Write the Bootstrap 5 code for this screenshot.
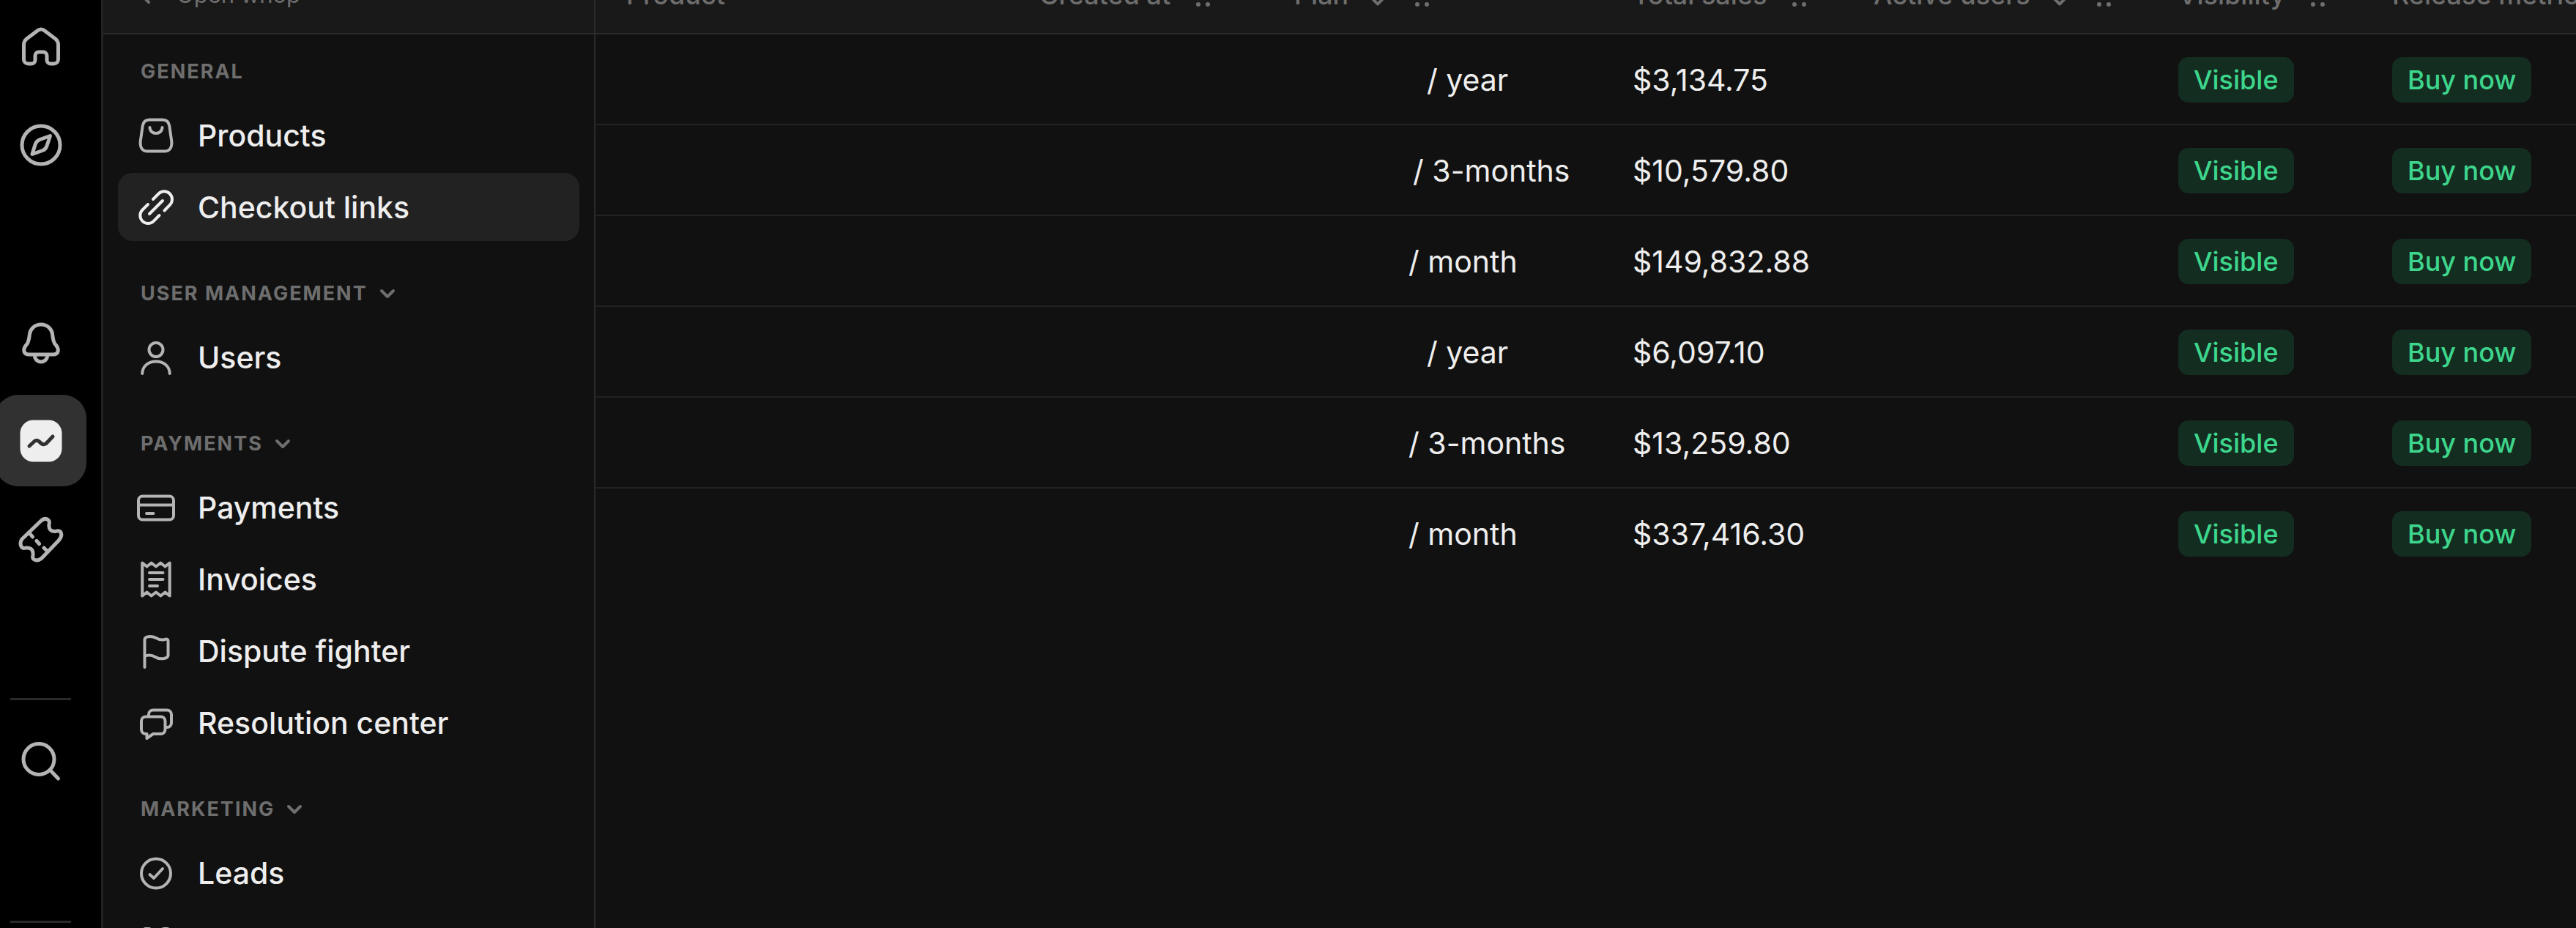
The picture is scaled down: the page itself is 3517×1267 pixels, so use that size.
<!DOCTYPE html>
<html lang="en" data-bs-theme="dark">
<head>
<meta charset="utf-8">
<meta name="viewport" content="width=device-width, initial-scale=1">
<title>Checkout links</title>
<link href="https://cdn.jsdelivr.net/npm/bootstrap@5.3.0/dist/css/bootstrap.min.css" rel="stylesheet">
<style>
  :root { --ink:#eeeeee; --soft:#b4b4b4; --dim:#6e6e6e; --line:#2a2a2a; --panel:#111111; --raised:#191919; }
  body { font-family: Inter, "Liberation Sans", sans-serif; background: var(--panel); color: var(--ink); font-size: 41px; line-height: 48px; }
  a { color: inherit; text-decoration: none; }
  svg { display: block; flex: none; fill: none; stroke: currentColor; stroke-linecap: round; stroke-linejoin: round; }

  /* icon rail */
  .rail { width: 141px; background: #000; border-right: 3px solid #222; padding-top: 1px; }
  .rail-group { width: 125px; gap: 9px; margin-left: -7px; }
  .rail-group + .rail-group { margin-top: 145px; }
  .rail-tile { width: 125px; height: 125px; border-radius: 32px; color: var(--soft); }
  .rail-tile svg { width: 64px; height: 64px; stroke-width: 5; }
  .rail-tile.active { background: #313131; color: var(--ink); }
  .rail-rule { width: 83px; height: 3px; margin: 155px 0 21px 14px; background: var(--line); opacity: 1; border: 0; }

  /* sidebar */
  .side { width: 672px; border-right: 2px solid var(--line); }
  .side-top { height: 106px; padding: 0 36px; background: var(--raised); border-bottom: 2px solid var(--line); color: var(--dim); font-size: 31px; gap: 24px; }
  .side-top svg { width: 40px; height: 40px; stroke-width: 4; }
  .side-body { padding: 31px 20px 0; }
  .side-group { margin-bottom: 52px; }
  .side-label { height: 40px; margin-bottom: 20px; padding: 0 31px; border: 0; background: none; color: var(--dim); font-size: 27px; line-height: 40px; font-weight: 700; letter-spacing: 2px; gap: 15px; text-transform: uppercase; }
  .side-label svg { width: 24px; height: 24px; stroke-width: 4; }
  .side-links { gap: 5px; }
  .side-link { height: 93px; padding: 0 24px; gap: 29px; border-radius: 20px; font-weight: 500; }
  .side-link svg { width: 56px; height: 56px; stroke-width: 4; color: var(--soft); }
  .side-link.active { background: #222; }
  .side-link.active svg { color: var(--ink); }

  /* table */
  .grid-table { table-layout: fixed; width: 100%; border-collapse: separate; border-spacing: 0; }
  .grid-table th { height: 106px; padding: 0 42px; background: var(--raised); border-bottom: 2px solid var(--line); color: var(--dim); font-size: 36px; font-weight: 500; white-space: nowrap; vertical-align: middle; }
  .grid-table td { height: 124px; padding: 2px 42px 0; border-bottom: 2px solid #222; white-space: nowrap; vertical-align: middle; }
  .grid-table tbody tr:last-child td { border-bottom-color: transparent; }
  .th-in { gap: 34px; }
  .th-in-sort { gap: 28px; }
  .grip { width: 20px; height: 36px; fill: currentColor; stroke: none; }
  .sorter { width: 24px; height: 36px; stroke-width: 4; margin-right: 10px; }
  .c-product { width: 564px; } .c-created { width: 348px; } .c-plan { width: 462px; }
  .c-sales { width: 329px; } .c-active { width: 416px; } .c-vis { width: 292px; }
  .price { display: inline-block; }
  .price-s { width: 156px; } .price-m { width: 162px; } .price-l { width: 181px; }
  .pill { display: inline-block; padding: 0 21px; height: 62px; line-height: 62px; border-radius: 14px; background: #132d21; color: #3dd68c; font-size: 36px; font-weight: 500; vertical-align: middle; }

  /* the bar over both panes runs past the top of the window */
  .bar-pull { margin-top: -59px; }
</style>
<script src="https://cdn.jsdelivr.net/npm/bootstrap@5.3.0/dist/js/bootstrap.bundle.min.js"></script>
</head>
<body>
<div class="d-flex vh-100 overflow-hidden">

  <nav class="rail flex-shrink-0 overflow-hidden" aria-label="Main">
    <div class="rail-group d-flex flex-column">
      <a href="#" class="rail-tile d-flex align-items-center justify-content-center" aria-label="Home"><svg viewBox="0 0 64 64"><path d="M32 8c2 0 3.500.7 5 2L51 20.500c3 2.300 4.500 4.500 4.500 8.500v20a6 6 0 0 1-6 6H45a5 5 0 0 1-5-5v-6a5 5 0 0 0-5-5h-6a5 5 0 0 0-5 5v6a5 5 0 0 1-5 5h-4.500a6 6 0 0 1-6-6V29c0-4 1.500-6.200 4.500-8.500L27 10c1.500-1.300 3-2 5-2z"/></svg></a>
      <a href="#" class="rail-tile d-flex align-items-center justify-content-center" aria-label="Discover"><svg viewBox="0 0 64 64"><circle cx="32" cy="32" r="26"/><path d="M44.500 19.500L40 33q-1.500 5-6 6.500L20 44.500 24 31.500q1.500-5 6.500-7z"/></svg></a>
    </div>
    <div class="rail-group d-flex flex-column">
      <a href="#" class="rail-tile d-flex align-items-center justify-content-center" aria-label="Notifications"><svg viewBox="0 0 64 64"><path d="M32 7C40.500 7 46.500 13 47.500 20 48.500 27 48.500 30 51 33.500 58 41 56 48 48 48H16C8 48 6 41 13 33.500 15.500 30 15.500 27 16.500 20 17.500 13 23.500 7 32 7zM23.500 50a8.500 8 0 0 0 17 0"/></svg></a>
      <a href="#" class="rail-tile active d-flex align-items-center justify-content-center" aria-label="Dashboard" aria-current="page"><svg viewBox="0 0 64 64"><rect x="3.500" y="3.500" width="57" height="57" rx="18" fill="#eee" stroke="none"/><path stroke="#313131" d="M16 39l7-6.500q3-2.500 6 0l3.500 3q3 2.500 6.500 0L48 26"/></svg></a>
      <a href="#" class="rail-tile d-flex align-items-center justify-content-center" aria-label="Tickets"><svg viewBox="0 0 64 64"><path d="M6 32L31 8q6-6 11-2 2 2 1 6 -1 10 9 9.500 4-1.500 6.500.5 3.500 5-2.500 12L33 58q-6 5-11 1.500-2-1.500-1-5.500 1-11-10-10-3 1-5-.5-4-5.500 0-11.500zM16 23.500l4.500 5.500M26 34.500l3.500 4M36 44l4 4"/></svg></a>
    </div>
    <hr class="rail-rule">
    <div class="d-flex rail-group">
      <button type="button" class="rail-tile btn border-0 p-0 d-flex align-items-center justify-content-center" aria-label="Search"><svg viewBox="0 0 64 64"><circle cx="29" cy="28.500" r="21"/><path d="M44.500 43.500L55.500 55"/></svg></button>
    </div>
    <hr class="rail-rule">
  </nav>

  <aside class="side flex-shrink-0 overflow-hidden">
    <a href="#" class="side-top bar-pull d-flex align-items-center"><svg viewBox="0 0 40 40"><path d="M26 10L16 20l10 10"/></svg>Open whop</a>
    <div class="side-body">
      <section class="side-group">
        <div class="side-label">General</div>
        <div class="side-links d-flex flex-column">
          <a href="#" class="side-link d-flex align-items-center"><svg viewBox="0 0 56 56"><path d="M19 6.500H37C42.500 6.500 45.500 10 46.300 15L49.300 36C50 45 46.500 49.500 39.500 49.500H16.500C9.500 49.500 6 45 6.700 36L9.700 15C10.500 10 13.500 6.500 19 6.500zM19.500 17c0 5 4 8 8.500 8s8.500-3 8.500-8"/></svg>Products</a>
          <a href="#" class="side-link active d-flex align-items-center" aria-current="page"><svg viewBox="0 0 56 56"><path d="M24 17L31.500 9.500A10.800 10.800 0 0 1 46.800 24.800L39.500 32.500M17 24L9.500 31.500A10.800 10.800 0 0 0 24.800 46.800L32.500 39M19 37L37 19"/></svg>Checkout links</a>
        </div>
      </section>
      <section class="side-group">
        <button type="button" class="side-label d-flex align-items-center">User management<svg viewBox="0 0 24 24"><path d="M4 8l8 8 8-8"/></svg></button>
        <div class="side-links d-flex flex-column">
          <a href="#" class="side-link d-flex align-items-center"><svg viewBox="0 0 56 56"><circle cx="28" cy="17.500" r="9.500"/><path d="M9.300 50C9.300 40 17.500 33.500 28 33.500S46.700 40 46.700 50"/></svg>Users</a>
        </div>
      </section>
      <section class="side-group">
        <button type="button" class="side-label d-flex align-items-center">Payments<svg viewBox="0 0 24 24"><path d="M4 8l8 8 8-8"/></svg></button>
        <div class="side-links d-flex flex-column">
          <a href="#" class="side-link d-flex align-items-center"><svg viewBox="0 0 56 56"><rect x="4" y="12.500" width="48" height="32" rx="5.500"/><path d="M4 24.500H52M15 36H24.500"/></svg>Payments</a>
          <a href="#" class="side-link d-flex align-items-center"><svg viewBox="0 0 56 56"><path d="M9.300 5.500L15.500 10.500 21.700 5.500 28 10.500 34.300 5.500 40.500 10.500 46.700 5.500V50.500L40.500 45.500 34.300 50.500 28 45.500 21.700 50.500 15.500 45.500 9.300 50.500zM19 19H37.500M19 28H37.500M19 37H30"/></svg>Invoices</a>
          <a href="#" class="side-link d-flex align-items-center"><svg viewBox="0 0 56 56"><path d="M12.500 50V12C12.500 8 21 6.500 28 10 33 13 36 13 40 12Q44.500 10.500 44.500 14V34C44 38.500 33 40 27 36 22 33 17 33 12.500 35"/></svg>Dispute fighter</a>
          <a href="#" class="side-link d-flex align-items-center"><svg viewBox="0 0 56 56"><path d="M14 19.500H34.500a6 6 0 0 1 6 6V37a6 6 0 0 1-6 6H24L15.500 49V43H14a6 6 0 0 1-6-6V25.500a6 6 0 0 1 6-6zM18 18V16.500a6 6 0 0 1 6-6H43a6 6 0 0 1 6 6V28a6 6 0 0 1-6 6h-1"/></svg>Resolution center</a>
        </div>
      </section>
      <section class="side-group">
        <button type="button" class="side-label d-flex align-items-center">Marketing<svg viewBox="0 0 24 24"><path d="M4 8l8 8 8-8"/></svg></button>
        <div class="side-links d-flex flex-column">
          <a href="#" class="side-link d-flex align-items-center"><svg viewBox="0 0 56 56"><circle cx="28" cy="28.500" r="20"/><path d="M19.500 30L25 35 37 22"/></svg>Leads</a>
          <a href="#" class="side-link d-flex align-items-center" aria-label="Apps"><svg viewBox="0 0 56 56"><rect x="10" y="6" width="12" height="14" rx="4"/><rect x="35" y="6" width="12" height="14" rx="4"/><rect x="10" y="34" width="12" height="14" rx="4"/><rect x="35" y="34" width="12" height="14" rx="4"/></svg></a>
        </div>
      </section>
    </div>
  </aside>

  <main class="flex-grow-1 overflow-hidden">
    <table class="grid-table bar-pull">
      <colgroup><col class="c-product"><col class="c-created"><col class="c-plan"><col class="c-sales"><col class="c-active"><col class="c-vis"><col></colgroup>
      <thead>
        <tr>
          <th scope="col">Product</th>
          <th scope="col"><div class="th-in d-flex align-items-center">Created at<svg class="grip" viewBox="0 0 20 36"><circle cx="4" cy="6" r="3"/><circle cx="17" cy="6" r="3"/><circle cx="4" cy="18" r="3"/><circle cx="17" cy="18" r="3"/><circle cx="4" cy="31" r="3"/><circle cx="17" cy="31" r="3"/></svg></div></th>
          <th scope="col"><div class="th-in-sort d-flex align-items-center">Plan<svg class="sorter" viewBox="0 0 24 36"><path d="M2 20.500l10 10 10-10"/></svg><svg class="grip" viewBox="0 0 20 36"><circle cx="4" cy="6" r="3"/><circle cx="17" cy="6" r="3"/><circle cx="4" cy="18" r="3"/><circle cx="17" cy="18" r="3"/><circle cx="4" cy="31" r="3"/><circle cx="17" cy="31" r="3"/></svg></div></th>
          <th scope="col"><div class="th-in d-flex align-items-center">Total sales<svg class="grip" viewBox="0 0 20 36"><circle cx="4" cy="6" r="3"/><circle cx="17" cy="6" r="3"/><circle cx="4" cy="18" r="3"/><circle cx="17" cy="18" r="3"/><circle cx="4" cy="31" r="3"/><circle cx="17" cy="31" r="3"/></svg></div></th>
          <th scope="col"><div class="th-in-sort d-flex align-items-center">Active users<svg class="sorter" viewBox="0 0 24 36"><path d="M2 20.500l10 10 10-10"/></svg><svg class="grip" viewBox="0 0 20 36"><circle cx="4" cy="6" r="3"/><circle cx="17" cy="6" r="3"/><circle cx="4" cy="18" r="3"/><circle cx="17" cy="18" r="3"/><circle cx="4" cy="31" r="3"/><circle cx="17" cy="31" r="3"/></svg></div></th>
          <th scope="col"><div class="th-in d-flex align-items-center">Visibility<svg class="grip" viewBox="0 0 20 36"><circle cx="4" cy="6" r="3"/><circle cx="17" cy="6" r="3"/><circle cx="4" cy="18" r="3"/><circle cx="17" cy="18" r="3"/><circle cx="4" cy="31" r="3"/><circle cx="17" cy="31" r="3"/></svg></div></th>
          <th scope="col">Release metric</th>
        </tr>
      </thead>
      <tbody>
        <tr><td></td><td></td><td><span class="price price-l"></span>/ year</td><td>$3,134.75</td><td></td><td><span class="pill">Visible</span></td><td><span class="pill">Buy now</span></td></tr>
        <tr><td></td><td></td><td><span class="price price-m"></span>/ 3-months</td><td>$10,579.80</td><td></td><td><span class="pill">Visible</span></td><td><span class="pill">Buy now</span></td></tr>
        <tr><td></td><td></td><td><span class="price price-s"></span>/ month</td><td>$149,832.88</td><td></td><td><span class="pill">Visible</span></td><td><span class="pill">Buy now</span></td></tr>
        <tr><td></td><td></td><td><span class="price price-l"></span>/ year</td><td>$6,097.10</td><td></td><td><span class="pill">Visible</span></td><td><span class="pill">Buy now</span></td></tr>
        <tr><td></td><td></td><td><span class="price price-s"></span>/ 3-months</td><td>$13,259.80</td><td></td><td><span class="pill">Visible</span></td><td><span class="pill">Buy now</span></td></tr>
        <tr><td></td><td></td><td><span class="price price-s"></span>/ month</td><td>$337,416.30</td><td></td><td><span class="pill">Visible</span></td><td><span class="pill">Buy now</span></td></tr>
      </tbody>
    </table>
  </main>
</div>
</body>
</html>
